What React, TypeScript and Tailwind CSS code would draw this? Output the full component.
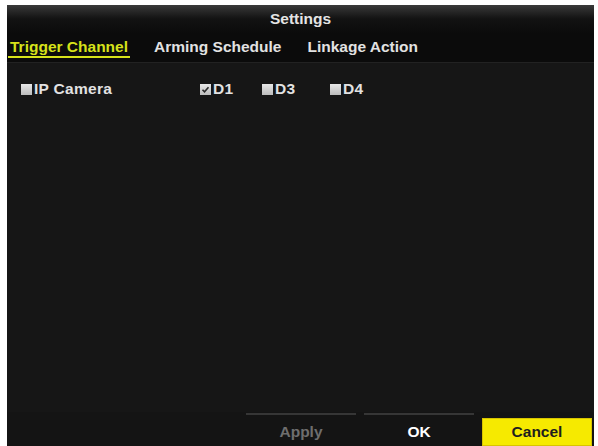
const Box = ({ checked = false }: { checked?: boolean }) => (
  <span className="relative inline-block w-[11px] h-[11px] bg-gradient-to-b from-[#e8e8e8] to-[#bcbcbc] shrink-0">
    {checked && (
      <svg viewBox="0 0 11 11" className="absolute inset-0 w-[11px] h-[11px]" fill="none" stroke="#2a2a2a" strokeWidth="1.6">
        <path d="M2.5 5.8l2 2 4-4.6" />
      </svg>
    )}
  </span>
);

const Item = ({ label, checked, width }: { label: string; checked?: boolean; width: string }) => (
  <div className={`flex items-center gap-[2px] ${width}`}>
    <Box checked={checked} />
    <span className="tracking-[0.3px]">{label}</span>
  </div>
);

const App = () => {
  return (
    <div className="w-[598px] h-[446px] bg-white pl-[7px] pt-[5px] pr-[4px] overflow-hidden font-['Liberation_Sans',Arial,sans-serif] font-bold text-[15.5px] leading-[18px]">
      <div className="flex flex-col h-full bg-[#161616]">
        {/* title */}
        <div className="h-[28px] pt-[5px] text-center text-[#e4e4e4] bg-gradient-to-b from-[#3a3a3a] via-[#121212] to-[#0b0b0b]">
          Settings
        </div>

        {/* tabs */}
        <div className="h-[30px] pt-[5px] pl-[1px] flex gap-[22px] bg-[#0b0b0b] border-b border-[#222]">
          <div className="px-[2px] h-[20px] border-b-2 border-[#d6e21a] text-[#d6e21a]">Trigger Channel</div>
          <div className="px-[2px] h-[20px] text-[#e2e2e2]">Arming Schedule</div>
          <div className="px-[2px] h-[20px] text-[#e2e2e2]">Linkage Action</div>
        </div>

        {/* channels */}
        <div className="flex-1 pt-[17px] pl-[14px] text-[#e2e2e2]">
          <div className="flex">
            <Item label="IP Camera" width="w-[179px]" />
            <Item label="D1" checked width="w-[62px]" />
            <Item label="D3" width="w-[68px]" />
            <Item label="D4" width="w-[40px]" />
          </div>
        </div>

        {/* buttons */}
        <div className="h-[34px] flex items-end justify-end gap-[8px] pr-[2px] bg-[#141414]">
          <div className="w-[110px] h-[33px] pt-[2px] flex items-center justify-center border-t-2 border-[#363636] bg-[#141414] text-[#6e6e6e]">
            Apply
          </div>
          <div className="w-[110px] h-[33px] pt-[2px] flex items-center justify-center border-t-2 border-[#363636] bg-[#141414] text-white">
            OK
          </div>
          <div className="w-[110px] h-[28px] flex items-center justify-center bg-[#f6ea00] border border-[#d8c400] text-[#1e1e1e]">
            Cancel
          </div>
        </div>
      </div>
    </div>
  );
};

export default App;
